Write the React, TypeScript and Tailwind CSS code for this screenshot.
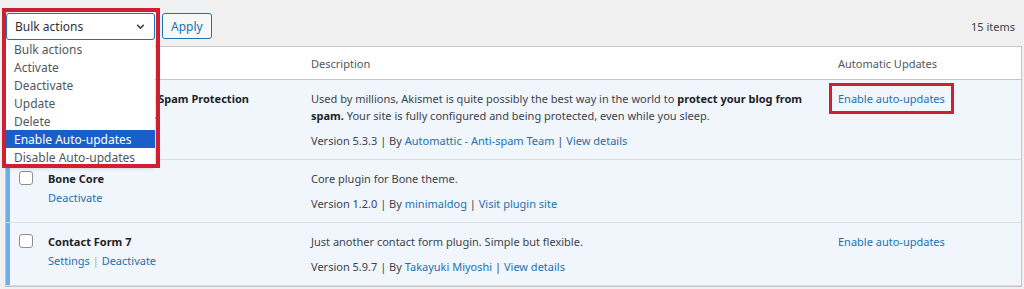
import React from 'react';

const link = 'text-[#2271b1]';

type Row = {
  name: string;
  actions: string[];
  desc: React.ReactNode;
  version: string;
  author: string;
  extra: string;
  auto: boolean;
  boxed?: boolean;
};

const rows: Row[] = [
  {
    name: 'Akismet Anti-spam: Spam Protection',
    actions: ['Settings', 'Deactivate'],
    desc: (
      <>
        Used by millions, Akismet is quite possibly the best way in the world to{' '}
        <b className="font-bold text-[#1d2327]">protect your blog from spam.</b> Your site is fully configured and being
        protected, even while you sleep.
      </>
    ),
    version: '5.3.3',
    author: 'Automattic - Anti-spam Team',
    extra: 'View details',
    auto: true,
    boxed: true,
  },
  {
    name: 'Bone Core',
    actions: ['Deactivate'],
    desc: 'Core plugin for Bone theme.',
    version: '1.2.0',
    author: 'minimaldog',
    extra: 'Visit plugin site',
    auto: false,
  },
  {
    name: 'Contact Form 7',
    actions: ['Settings', 'Deactivate'],
    desc: 'Just another contact form plugin. Simple but flexible.',
    version: '5.9.7',
    author: 'Takayuki Miyoshi',
    extra: 'View details',
    auto: true,
  },
];

const options = ['Bulk actions', 'Activate', 'Deactivate', 'Update', 'Delete', 'Enable Auto-updates', 'Disable Auto-updates'];

function Checkbox() {
  return <div className="w-[14px] h-[14px] rounded-[3px] border border-[#8c8f94] bg-white" />;
}

export default function App() {
  return (
    <div className="w-[1024px] h-[289px] overflow-hidden bg-[#f0f0f1] text-[11px] leading-[17px] text-[#3c434a] font-['Noto_Sans',sans-serif]">
      {/* top nav */}
      <div className="h-[46px] flex items-start pt-[13px] pl-[6px] pr-[9px]">
        <div className="relative z-10 w-[149px] h-[27px]">
          <div className="h-full flex items-center justify-between pl-[8px] pr-[7px] bg-white border border-[#2271b1] rounded-[3px] text-[12px] text-[#2c3338]">
            <span>Bulk actions</span>
            <svg width="13" height="13" viewBox="0 0 20 20" fill="none" stroke="#3c434a" strokeWidth="2.2">
              <path d="M5 7.5l5 5 5-5" />
            </svg>
          </div>
          <div className="absolute left-0 top-[27px] w-[149px] bg-white rounded-b-[4px] shadow-[0_2px_4px_rgba(0,0,0,0.2)] text-[12px]">
            {options.map((o) => (
              <div
                key={o}
                className={
                  o === 'Enable Auto-updates'
                    ? 'h-[18px] pl-[8px] flex items-center bg-[#1a5fc8] text-white'
                    : 'h-[18px] pl-[8px] flex items-center text-[#50575e]'
                }
              >
                {o}
              </div>
            ))}
          </div>
          <div className="absolute left-[-4px] top-[-5px] w-[158px] h-[160px] border-4 border-[#d0202f] pointer-events-none" />
        </div>
        <button className="ml-[7px] h-[26px] px-[8px] rounded-[3px] border border-[#2271b1] bg-[#f6f7f7] text-[12px] text-[#2271b1]">
          Apply
        </button>
        <span className="ml-auto mt-[5px] text-[#3c434a]">15 items</span>
      </div>

      {/* table */}
      <div className="ml-[5px] w-[1017px] border border-[#c3c4c7] bg-white">
        <div className="flex h-[33px] items-center border-b border-[#c3c4c7] text-[#50575e]">
          <div className="w-[32px]" />
          <div className="w-[263px]" />
          <div className="w-[527px] pl-[10px]">Description</div>
          <div className="flex-1 pl-[10px]">Automatic Updates</div>
        </div>
        {rows.map((r) => (
          <div
            key={r.name}
            className="flex bg-[#f0f6fc] border-b border-[#dcdcde] shadow-[inset_4px_0_0_#72aee6]"
          >
            <div className="w-[32px] pt-[11px] pl-[13px]">
              <Checkbox />
            </div>
            <div className="w-[263px] pt-[10px] pl-[10px]">
              <div className="font-bold text-[#1d2327]">{r.name}</div>
              <div className={`mt-[2px] ${link}`}>
                {r.actions.map((a, i) => (
                  <span key={a}>
                    {i > 0 && <span className="text-[#a7aaad]"> | </span>}
                    {a}
                  </span>
                ))}
              </div>
            </div>
            <div className="w-[527px] pl-[10px] pr-[10px] pt-[10px] pb-[10px]">
              <div>{r.desc}</div>
              <div className="mt-[8px]">
                Version {r.version} | By <span className={link}>{r.author}</span> | <span className={link}>{r.extra}</span>
              </div>
            </div>
            <div className="flex-1 pl-[10px] pt-[10px]">
              {r.auto &&
                (r.boxed ? (
                  <span className={`inline-block -ml-[9px] -mt-[7px] px-[6px] py-[4px] border-[3px] border-[#d0202f] ${link}`}>
                    Enable auto-updates
                  </span>
                ) : (
                  <span className={link}>Enable auto-updates</span>
                ))}
            </div>
          </div>
        ))}
      </div>
    </div>
  );
}
